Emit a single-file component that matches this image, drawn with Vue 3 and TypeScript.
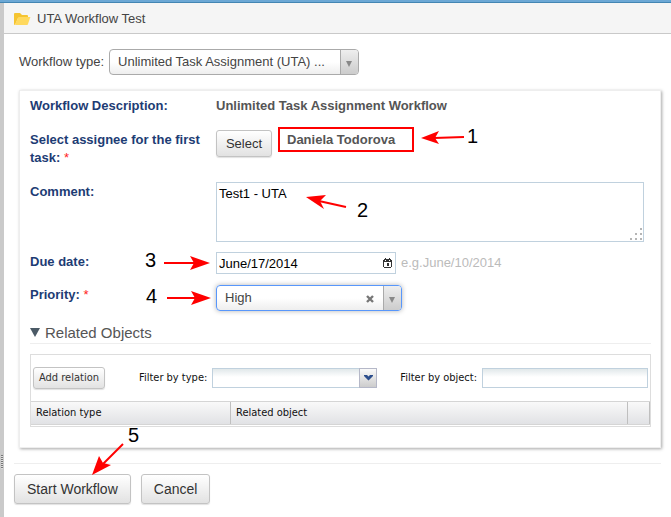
<script setup lang="ts">
import { ref } from 'vue'

interface Marker {
  label: number
  x: number
  y: number
  line: [number, number, number, number]
  head: string
}

const workflowType = ref('uta')
const comment = ref('Test1 - UTA')
const dueDate = ref('June/17/2014')
const priority = ref('high')
const filterType = ref('')
const filterObject = ref('')
const expanded = ref(true)

const markers: Marker[] = [
  { label: 1, x: 467, y: 143, line: [464, 137, 434, 138], head: '421,138 439,131 435,138 439,144' },
  { label: 2, x: 357, y: 217, line: [346, 207, 319, 201], head: '306,197 326,195 320,201 324,209' },
  { label: 3, x: 145, y: 267, line: [164, 263, 195, 263], head: '210,263 190,256 194,263 190,270' },
  { label: 4, x: 146, y: 303, line: [167, 298, 196, 298], head: '211,298 191,291 195,298 191,305' },
  { label: 5, x: 128, y: 442, line: [123, 444, 103, 464], head: '92,475 99,456 103,463 111,465' },
]
</script>

<template>
  <div class="page">
    <div class="body">
      <div class="splitter"><span class="grip"></span></div>
      <main class="main">
        <header class="title">
          <svg class="folder" width="17" height="14" viewBox="0 0 17 14" aria-hidden="true">
            <path d="M0 12V2Q0 1 1 1H6L8 3H13Q14 3 14 4V6H4L1 13Q0 13 0 12Z" fill="#f5c431" />
            <path d="M1 12L4 6Q4 5 5 5H16Q17 5 16 6L14 12Q14 13 13 13H2Q1 13 1 12Z" fill="#ffd95e" />
          </svg>
          <h1>UTA Workflow Test</h1>
        </header>

        <form class="content" @submit.prevent>
          <div class="type-row">
            <label for="wf-type">Workflow type:</label>
            <div class="combo combo-type">
              <select id="wf-type" v-model="workflowType">
                <option value="uta">Unlimited Task Assignment (UTA) ...</option>
              </select>
              <span class="combo-arrow"></span>
            </div>
          </div>

          <section class="panel">
            <div class="row row-description">
              <span class="name">Workflow Description:</span>
              <strong class="value">Unlimited Task Assignment Workflow</strong>
            </div>
            <div class="row row-assignee">
              <span id="assignee" class="name">Select assignee for the first <span class="last-word">task: <i>*</i></span></span>
              <div class="assignee">
                <button type="button" class="btn btn-select" aria-describedby="assignee">Select</button>
                <strong class="person">Daniela Todorova</strong>
              </div>
            </div>
            <div class="row row-comment">
              <label class="name" for="comment">Comment:</label>
              <div class="area">
                <textarea id="comment" v-model="comment"></textarea>
                <svg class="resize" width="12" height="12" viewBox="0 0 12 12" aria-hidden="true">
                  <path d="M10 0h2v2h-2zM5 5h2v2h-2zM10 5h2v2h-2zM0 10h2v2h-2zM5 10h2v2h-2zM10 10h2v2h-2z" fill="#b5b5b5" />
                </svg>
              </div>
            </div>
            <div class="row row-date">
              <label class="name" for="due">Due date:</label>
              <div class="date">
                <div class="date-box">
                  <input id="due" v-model="dueDate" type="text" />
                  <svg width="9" height="10" viewBox="0 0 9 10" aria-hidden="true">
                    <path d="M1 1h7v1h1v7H8v1H1V9H0V2h1zM1 4v5h7V4z" fill="#333" fill-rule="evenodd" />
                    <path d="M2 0h1v2H2zM6 0h1v2H6zM4 5h2v3H4z" fill="#333" />
                    <path d="M2 2h1v1H2zM6 2h1v1H6z" fill="#fff" />
                  </svg>
                </div>
                <span class="hint">e.g.June/10/2014</span>
              </div>
            </div>
            <div class="row row-priority">
              <label class="name" for="priority">Priority: <i>*</i></label>
              <div class="combo combo-priority">
                <select id="priority" v-model="priority">
                  <option value="high">High</option>
                  <option value=""></option>
                </select>
                <button type="button" class="clear" aria-label="Clear priority" @click="priority = ''">
                  <svg width="8" height="8" viewBox="0 0 8 8"><path d="M1 1L7 7M7 1L1 7" stroke="#777" stroke-width="2.4" /></svg>
                </button>
                <span class="combo-arrow"></span>
              </div>
            </div>

            <h2>
              <button type="button" class="toggle" :aria-expanded="expanded" @click="expanded = !expanded">
                <svg width="10" height="9" viewBox="0 0 10 9" aria-hidden="true"><path d="M0 0H10L5 9Z" fill="#4b5a66" /></svg>
                Related Objects
              </button>
            </h2>

            <div v-if="expanded" class="relations">
              <div class="toolbar">
                <button type="button" class="btn btn-add">Add relation</button>
                <label for="filter-type">Filter by type:</label>
                <div class="filter-type">
                  <select id="filter-type" v-model="filterType"><option value=""></option></select>
                  <span class="trigger">
                    <svg width="9" height="6" viewBox="0 0 9 6" aria-hidden="true"><path d="M0 0H3L4.5 1.5L6 0H9V1L4.5 5.5L0 1Z" fill="#2c4e8c" /></svg>
                  </span>
                </div>
                <label for="filter-object">Filter by object:</label>
                <input id="filter-object" v-model="filterObject" type="text" />
              </div>
              <table>
                <colgroup><col class="col-type" /><col /><col class="col-end" /></colgroup>
                <thead>
                  <tr><th scope="col">Relation type</th><th scope="col">Related object</th><td></td></tr>
                </thead>
              </table>
            </div>
          </section>

          <footer class="actions">
            <button type="submit" class="btn btn-large">Start Workflow</button>
            <button type="button" class="btn btn-large">Cancel</button>
          </footer>
        </form>
      </main>
    </div>

    <svg class="markers" width="671" height="517" viewBox="0 0 671 517">
      <g v-for="m in markers" :key="m.label">
        <line :x1="m.line[0]" :y1="m.line[1]" :x2="m.line[2]" :y2="m.line[3]" />
        <polygon :points="m.head" />
        <text :x="m.x" :y="m.y">{{ m.label }}</text>
      </g>
    </svg>
  </div>
</template>

<style>
body {
  margin: 0;
  background: #fff;
}
</style>

<style scoped>
* {
  box-sizing: border-box;
}
.page {
  position: relative;
  display: flex;
  flex-direction: column;
  min-height: 100vh;
  border-top: 2px solid #6ca8d5;
  font: 13px/18px "Liberation Sans", Arial, sans-serif;
  color: #444;
}
.body {
  display: flex;
  flex: 1;
  border-top: 1px solid #4386b3;
}
button,
input,
select,
textarea {
  margin: 0;
  font: inherit;
  color: inherit;
  outline: none;
  border-radius: 0;
}
select {
  appearance: none;
}
.splitter {
  display: flex;
  align-items: flex-end;
  flex: 0 0 4px;
  padding: 0 0 48px 1px;
  background: #cacaca;
}
.grip {
  width: 2px;
  height: 14px;
  background: repeating-linear-gradient(#777 0 1px, #ddd 1px 2px);
}
.main {
  flex: 1;
  min-width: 0;
}
.title {
  display: flex;
  align-items: center;
  gap: 6px;
  height: 31px;
  padding: 2px 0 0 10px;
  border-bottom: 1px solid #c9c9c9;
  background: #f5f5f5;
}
h1 {
  margin: 0;
  font-size: 13px;
  font-weight: 400;
}
.content {
  padding: 15px 10px 10px;
}
.type-row {
  display: flex;
  align-items: center;
  gap: 5px;
  padding-left: 5px;
}
.combo {
  position: relative;
}
.combo select {
  width: 100%;
  height: 26px;
  padding: 0 32px 0 8px;
  border: 1px solid #aaa;
  border-radius: 4px;
  background: linear-gradient(#fff 50%, #eee);
}
.combo-type {
  width: 250px;
}
.combo-arrow {
  position: absolute;
  top: 1px;
  right: 1px;
  bottom: 1px;
  width: 18px;
  border-left: 1px solid #aaa;
  border-radius: 0 3px 3px 0;
  background: linear-gradient(#eee, #ccc);
  pointer-events: none;
}
.combo-arrow::after {
  content: "";
  position: absolute;
  left: 5px;
  top: 11px;
  border: 3px solid transparent;
  border-top: 6px solid #888;
  border-bottom: 0;
}
.panel {
  margin: 15px 0 0 5px;
  padding: 6px 9px 20px 10px;
  border: 1px solid #eee;
  box-shadow: 1px 1px 3px rgba(0, 0, 0, 0.35);
}
.row {
  display: grid;
  grid-template-columns: 186px 1fr;
  align-items: start;
}
.name {
  padding: 1px 8px 0 0;
  color: #1d3c74;
  font-weight: 700;
}
.name i {
  color: #f22;
  font-style: normal;
  font-weight: 400;
}
.last-word {
  display: block;
}
.value,
.person {
  color: #555;
}
.row-description {
  height: 30px;
}
.row-description .name {
  padding-top: 0;
}
.row-assignee {
  height: 55px;
}
.row-assignee .name {
  padding-top: 4px;
}
.assignee {
  display: flex;
  gap: 6px;
}
.person {
  width: 136px;
  height: 25px;
  padding: 2px 7px;
  border: 2px solid #f00;
}
.btn {
  padding: 0;
  border: 1px solid #c3c3c3;
  border-radius: 3px;
  background: linear-gradient(#fff, #e2e2e2);
  box-shadow: 0 1px 1px rgba(0, 0, 0, 0.12);
  color: #333;
}
.btn-select {
  width: 56px;
  height: 27px;
  margin-top: 3px;
}
.area {
  position: relative;
  margin-right: 7px;
}
textarea {
  display: block;
  width: 100%;
  height: 60px;
  padding: 2px;
  border: 1px solid #c0d1de;
  resize: none;
  color: #000;
}
.resize {
  position: absolute;
  right: 2px;
  bottom: 2px;
}
.row-date {
  padding-top: 10px;
}
.date {
  display: flex;
  align-items: center;
  gap: 5px;
}
.date-box {
  display: flex;
  align-items: center;
  width: 180px;
  height: 22px;
  padding-right: 3px;
  border: 1px solid #c0d1de;
}
.date-box input {
  flex: 1;
  min-width: 0;
  height: 20px;
  padding: 0 2px;
  border: 0;
  background: none;
  color: #000;
}
.hint {
  color: #bbb;
}
.row-priority {
  padding-top: 11px;
}
.combo-priority {
  width: 186px;
}
.combo-priority select {
  border-color: #5897fb;
  box-shadow: 0 0 5px rgba(0, 0, 0, 0.3);
}
.clear {
  position: absolute;
  right: 28px;
  top: 10px;
  display: flex;
  padding: 0;
  border: 0;
  background: none;
}
h2 {
  margin: 12px 0 10px;
  padding-bottom: 1px;
  border-bottom: 1px solid #eee;
  font-size: 15px;
  font-weight: 400;
}
.toggle {
  display: flex;
  align-items: center;
  gap: 5px;
  height: 19px;
  padding: 0;
  border: 0;
  background: none;
  color: #555;
}
.relations {
  padding-bottom: 1px;
  border: 1px solid #ddd;
  font: 11px/14px "DejaVu Sans Condensed", Tahoma, sans-serif;
  color: #111;
}
.toolbar {
  display: flex;
  align-items: center;
  height: 46px;
  padding: 0 2px;
}
.btn-add {
  width: 72px;
  height: 22px;
  margin-right: auto;
}
.toolbar label {
  margin-right: 5px;
}
.filter-type {
  position: relative;
  width: 165px;
  margin-right: 23px;
}
.filter-type select,
.toolbar input {
  display: block;
  height: 20px;
  padding: 0 3px;
  border: 1px solid #c0d1de;
  background: linear-gradient(#e1e8ea, #fff 8px);
}
.filter-type select {
  width: 100%;
}
.toolbar input {
  width: 166px;
}
.trigger {
  position: absolute;
  top: 0;
  right: 0;
  bottom: 0;
  display: flex;
  align-items: center;
  justify-content: center;
  width: 18px;
  border: 1px solid #b5b8c8;
  background: linear-gradient(#fafafa, #ccc);
  pointer-events: none;
}
table {
  width: 100%;
  table-layout: fixed;
  border-collapse: separate;
  border-spacing: 0;
  border-top: 1px solid #d5d5d5;
  border-bottom: 1px solid #d5d5d5;
  background: linear-gradient(#f9f9f9, #e1e2e5);
}
.col-type {
  width: 200px;
}
.col-end {
  width: 22px;
}
th,
td {
  height: 22px;
  padding: 0 5px;
  border-right: 1px solid #bfbfbf;
  font-weight: 400;
  text-align: left;
}
.actions {
  display: flex;
  gap: 10px;
  margin-top: 15px;
  padding-top: 10px;
  border-top: 1px solid #eee;
}
.btn-large {
  height: 30px;
  padding: 0 12px;
  font-size: 14px;
}
.markers {
  position: absolute;
  top: -2px;
  left: 0;
  pointer-events: none;
}
.markers line {
  stroke: #f00;
  stroke-width: 2;
}
.markers polygon {
  fill: #f00;
}
.markers text {
  fill: #000;
  font-size: 20px;
}
</style>
